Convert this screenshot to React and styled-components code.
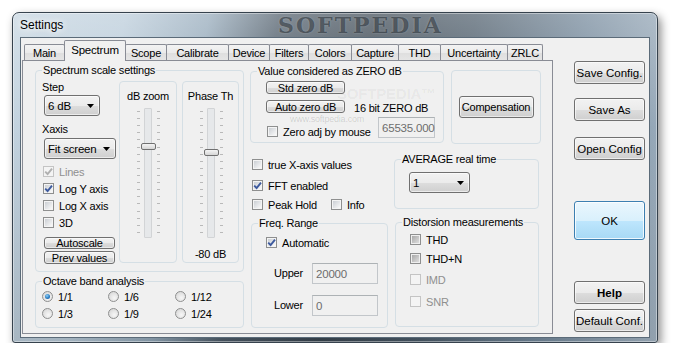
import React from 'react'
import styled, { createGlobalStyle } from 'styled-components'

const GlobalStyle = createGlobalStyle`
	html, body {
		margin: 0;
		background: #fff;
	}
	body {
		font-family: "Liberation Sans", Arial, sans-serif;
		font-size: 11px;
		color: #000;
	}
	* {
		box-sizing: border-box;
	}
`

const Stage = styled.div`
	padding: 12px 0 0 12px;
`

const Window = styled.div`
	position: relative;
	width: 646px;
	height: 331px;
	border: 1px solid #36424d;
	border-radius: 7px 7px 3px 3px;
	background:
		linear-gradient(180deg, rgba(255,255,255,0.3) 0%, rgba(255,255,255,0) 35%, rgba(0,0,0,0.12) 100%),
		linear-gradient(100deg, #c4d4e0 0%, #b9cbd9 16%, #93a8b9 28%, #4e5c69 38%, #3a4651 52%, #4b5b69 66%, #72879a 82%, #a6b7c6 100%);
	box-shadow: 3px 4px 10px rgba(0,0,0,0.45), inset 0 0 0 1px rgba(255,255,255,0.4);
	padding: 0 7px 4px 7px;
	display: flex;
	flex-direction: column;
`

const TitleBar = styled.div`
	position: relative;
	height: 24px;
	display: flex;
	align-items: center;
`

const TitleText = styled.span`
	position: relative;
	z-index: 1;
	font-size: 12px;
	color: #000;
	text-shadow: 0 0 6px #fff, 0 0 10px #fff;
`

const TitleMark = styled.span`
	position: absolute;
	left: 258px;
	top: 0;
	font-family: "DejaVu Serif", serif;
	font-weight: bold;
	font-size: 22px;
	line-height: 24px;
	letter-spacing: 2px;
	color: rgba(22, 30, 38, 0.55);
	text-shadow: 0 0 2px rgba(255,255,255,0.25);
`

const Client = styled.div`
	flex: 1;
	display: flex;
	background: #f0f0f0;
	border: 1px solid #5b6b79;
	padding: 2px 0 0 1px;
`

const TabArea = styled.div`
	display: flex;
	flex-direction: column;
	width: 531px;
`

const TabRow = styled.div`
	display: flex;
	align-items: flex-end;
	height: 21px;
	padding-left: 2px;
	margin-bottom: -1px;
	position: relative;
	z-index: 2;
`

const Tab = styled.div`
	position: relative;
	width: ${p => p.$w}px;
	height: ${p => (p.$active ? 21 : 16)}px;
	margin-left: ${p => (p.$first ? 0 : -1)}px;
	margin-bottom: ${p => (p.$active ? 0 : 1)}px;
	z-index: ${p => (p.$active ? 2 : 1)};
	border: 1px solid #898c95;
	border-bottom: none;
	border-radius: 2px 2px 0 0;
	background: ${p => (p.$active ? '#f0f0f0' : 'linear-gradient(#f3f3f3 0%, #ebebeb 50%, #dedede 51%, #e5e5e5 100%)')};
	display: flex;
	align-items: center;
	justify-content: center;
	padding-bottom: ${p => (p.$active ? 3 : 0)}px;
	font-size: ${p => (p.$active ? 11.5 : 11)}px;
	letter-spacing: -0.2px;
	white-space: nowrap;
`

const Panel = styled.div`
	position: relative;
	height: 274px;
	border: 1px solid #898c95;
	background: #f0f0f0;
	display: flex;
	align-items: flex-start;
	padding: 9px 0 0 12px;
	letter-spacing: -0.2px;
`

const Mark = styled.span`
	position: absolute;
	left: ${p => p.$x}px;
	top: ${p => p.$y}px;
	font-size: ${p => p.$size}px;
	font-weight: ${p => (p.$bold ? 'bold' : 'normal')};
	color: ${p => p.$color};
	white-space: nowrap;
	pointer-events: none;
`

const LeftCol = styled.div`
	display: flex;
	flex-direction: column;
	width: 209px;
	flex: none;
`

const MidCol = styled.div`
	display: flex;
	flex-direction: column;
	width: 290px;
	margin-left: 6px;
	flex: none;
`

const Row = styled.div`
	display: flex;
	align-items: ${p => p.$align || 'flex-start'};
	justify-content: ${p => p.$justify || 'flex-start'};
	height: ${p => p.$fill ? '100%' : 'auto'};
	margin-top: ${p => p.$mt || 0}px;
`

const Group = styled.div`
	position: relative;
	flex: none;
	width: ${p => p.$w}px;
	height: ${p => p.$h}px;
	margin-top: ${p => p.$mt || 0}px;
	margin-left: ${p => p.$ml || 0}px;
	border: 1px solid #d5dfe5;
	border-radius: 4px;
	padding: ${p => p.$pad || '0'};
`

const Legend = styled.span`
	position: absolute;
	top: -7px;
	left: 6px;
	padding: 0 1px;
	line-height: 13px;
	background: #f0f0f0;
	white-space: nowrap;
`

const Stack = styled.div`
	display: flex;
	flex-direction: column;
	align-items: flex-start;
	width: ${p => (p.$w ? `${p.$w}px` : 'auto')};
	padding-top: ${p => p.$pt || 0}px;
	flex: none;
`

const Label = styled.div`
	line-height: 13px;
	height: 13px;
	margin-top: ${p => p.$mt || 0}px;
	margin-left: ${p => p.$ml || 0}px;
	width: ${p => (p.$w ? `${p.$w}px` : 'auto')};
	white-space: nowrap;
	color: ${p => p.$color || '#000'};
`

const Drop = styled.div`
	width: ${p => p.$w}px;
	height: 21px;
	margin-top: ${p => p.$mt || 0}px;
	margin-left: ${p => p.$ml || 0}px;
	border: 1px solid #707070;
	border-radius: 3px;
	background: linear-gradient(#f2f2f2 0%, #ebebeb 50%, #dddddd 51%, #cfcfcf 100%);
	box-shadow: inset 0 0 0 1px rgba(255,255,255,0.6);
	display: flex;
	align-items: center;
	justify-content: space-between;
	padding: 0 5px 0 3px;
	font-size: 11.5px;
`

const Btn = styled.div`
	width: ${p => p.$w}px;
	height: ${p => p.$h}px;
	margin-top: ${p => p.$mt || 0}px;
	margin-left: ${p => p.$ml || 0}px;
	border: 1px solid #707070;
	border-radius: 3px;
	background: linear-gradient(#f2f2f2 0%, #ebebeb 50%, #dddddd 51%, #cfcfcf 100%);
	box-shadow: inset 0 0 0 1px rgba(255,255,255,0.55);
	display: flex;
	align-items: center;
	justify-content: center;
	line-height: 10px;
	white-space: nowrap;
	flex: none;
`

const Field = styled.div`
	width: ${p => p.$w}px;
	height: 21px;
	margin-left: ${p => p.$ml || 0};
	border: 1px solid #c2c6ca;
	border-top-color: #adb2b5;
	background: #f0f0f0;
	color: #6d6d6d;
	display: flex;
	align-items: center;
	padding-left: 3px;
	font-size: 11.5px;
	flex: none;
`

const CheckRow = styled.div`
	display: flex;
	align-items: center;
	height: 13px;
	margin-top: ${p => p.$mt || 0}px;
	margin-left: ${p => p.$ml || 0}px;
	color: ${p => (p.$disabled ? '#8f8f8f' : '#000')};
	white-space: nowrap;
	flex: none;
`

const CheckBox = styled.span`
	width: 11px;
	height: 11px;
	flex: none;
	margin-right: 5px;
	display: flex;
	align-items: center;
	justify-content: center;
	border: 1px solid ${p => (p.$disabled ? '#c4c4c4' : '#8e8f8f')};
	padding: 1px;
	background: ${p =>
		p.$disabled
			? '#f4f4f4'
			: p.$mixed
				? 'linear-gradient(135deg, #a8a8a8, #dedede) content-box, #efefef'
				: 'linear-gradient(135deg, #cbcfd4, #f9f9f9) content-box, #f4f4f4'};
	svg {
		margin: -2px;
	}
`

const RadioDot = styled.span`
	width: 11px;
	height: 11px;
	flex: none;
	margin-right: 5px;
	border-radius: 50%;
	border: 1px solid #8e8f8f;
	background: radial-gradient(circle at 60% 65%, #f7f7f7 0%, #d2d2d2 100%);
	display: flex;
	align-items: center;
	justify-content: center;
	&::after {
		content: '';
		display: ${p => (p.$on ? 'block' : 'none')};
		width: 5px;
		height: 5px;
		border-radius: 50%;
		background: radial-gradient(circle at 40% 35%, #8fd0f5 0%, #2b7dc4 55%, #17508d 100%);
	}
`

const RadioGrid = styled.div`
	display: grid;
	grid-template-columns: 66px 67px 66px;
	grid-auto-rows: 15px;
	row-gap: 2px;
`

const RadioCell = styled.div`
	display: flex;
	align-items: center;
`

const SubBox = styled.div`
	width: ${p => p.$w}px;
	height: 182px;
	margin-left: ${p => p.$ml || 0}px;
	border: 1px solid #d5dfe5;
	border-radius: 4px;
	display: flex;
	flex-direction: column;
	align-items: center;
	padding-top: 8px;
	flex: none;
`

const SliderBody = styled.div`
	display: flex;
	height: 130px;
	margin-top: 5px;
	margin-left: ${p => p.$ml || 0}px;
`

const TickCol = styled.div`
	display: flex;
	flex-direction: column;
	justify-content: space-between;
	padding: 3px 0 5px;
	width: 3px;
	margin: ${p => p.$m};
	span {
		display: block;
		height: 1px;
		background: #b9b9b9;
	}
`

const Track = styled.div`
	position: relative;
	width: 8px;
	height: 130px;
	border: 1px solid #d2d4d6;
	background: #e6e8ea;
	border-radius: 1px;
`

const Thumb = styled.div`
	position: absolute;
	left: -4px;
	width: 15px;
	height: 7px;
	border: 1px solid #707070;
	border-radius: 2px;
	background: linear-gradient(#f4f4f4, #d6d6d6);
`

const SideCol = styled.div`
	display: flex;
	flex-direction: column;
	margin-left: 21px;
	padding-top: 21px;
`

const SideBtn = styled.div`
	width: 71px;
	height: ${p => p.$h || 23}px;
	margin-top: ${p => p.$mt || 0}px;
	border: 1px solid ${p => (p.$primary ? '#3c7fb1' : '#707070')};
	border-radius: 3px;
	background: ${p =>
		p.$primary
			? 'linear-gradient(#eaf6fd 0%, #d9f0fc 50%, #bee6fd 51%, #a7d9f5 100%)'
			: 'linear-gradient(#f2f2f2 0%, #ebebeb 50%, #dddddd 51%, #cfcfcf 100%)'};
	box-shadow: inset 0 0 0 1px ${p => (p.$primary ? 'rgba(255,255,255,0.8)' : 'rgba(255,255,255,0.6)')};
	display: flex;
	align-items: center;
	justify-content: center;
	font-size: 11.5px;
	font-weight: ${p => (p.$bold ? 'bold' : 'normal')};
	white-space: nowrap;
`

const Arrow = () => (
	<svg width="7" height="4" viewBox="0 0 7 4">
		<path d="M0 0 H7 L3.5 4 Z" fill="#000" />
	</svg>
)

const Tick = ({ color }) => (
	<svg width="11" height="11" viewBox="0 0 11 11">
		<path d="M2.2 5.6 L4.6 8 L9 2.6" fill="none" stroke={color} strokeWidth="1.9" />
	</svg>
)

const Check = ({ label, checked, disabled, mixed, mt, ml }) => (
	<CheckRow $mt={mt} $ml={ml} $disabled={disabled}>
		<CheckBox $disabled={disabled} $mixed={mixed}>
			{checked && <Tick color={disabled ? '#b0b0b0' : '#3d5a9e'} />}
		</CheckBox>
		<span>{label}</span>
	</CheckRow>
)

const Slider = ({ pos, ml }) => (
	<SliderBody $ml={ml}>
		<TickCol $m="0 4px 0 0">
			{Array.from({ length: 18 }, (_, i) => <span key={i} />)}
		</TickCol>
		<Track>
			<Thumb style={{ top: pos }} />
		</Track>
		<TickCol $m="0 0 0 5px">
			{Array.from({ length: 18 }, (_, i) => <span key={i} />)}
		</TickCol>
	</SliderBody>
)

const tabs = [
	['Main', 41],
	['Spectrum', 62],
	['Scope', 42],
	['Calibrate', 63],
	['Device', 42],
	['Filters', 40],
	['Colors', 44],
	['Capture', 48],
	['THD', 43],
	['Uncertainty', 68],
	['ZRLC', 36],
]

const octaves = [
	['1/1', true],
	['1/6'],
	['1/12'],
	['1/3'],
	['1/9'],
	['1/24'],
]

export default function App() {
	return (
		<Stage>
			<GlobalStyle />
			<Window>
				<TitleBar>
					<TitleMark>SOFTPEDIA</TitleMark>
					<TitleText>Settings</TitleText>
				</TitleBar>
				<Client>
					<TabArea>
						<TabRow>
							{tabs.map(([name, w], i) => (
								<Tab key={name} $w={w} $first={i === 0} $active={name === 'Spectrum'}>
									{name}
								</Tab>
							))}
						</TabRow>
						<Panel>
							<Mark $x={314} $y={24} $size={15} $bold $color="rgba(0,0,0,0.05)">SOFTPEDIA™</Mark>
							<Mark $x={267} $y={53} $size={9} $color="rgba(0,0,0,0.15)">www.softpedia.com</Mark>

							<LeftCol>
								<Group $w={209} $h={202} $pad="10px 0 0 6px">
									<Legend>Spectrum scale settings</Legend>
									<Row>
										<Stack $w={77}>
											<Label>Step</Label>
											<Drop $w={56} $mt={1} $ml={2}>
												<span>6 dB</span>
												<Arrow />
											</Drop>
											<Label $mt={7}>Xaxis</Label>
											<Drop $w={72} $mt={2} $ml={2}>
												<span>Fit screen</span>
												<Arrow />
											</Drop>
											<Check label="Lines" checked disabled mt={6} ml={1} />
											<Check label="Log Y axis" checked mt={4} ml={1} />
											<Check label="Log X axis" mt={4} ml={1} />
											<Check label="3D" mt={4} ml={1} />
											<Btn $w={71} $h={12} $mt={8} $ml={2}>Autoscale</Btn>
											<Btn $w={71} $h={13} $mt={2} $ml={2}>Prev values</Btn>
										</Stack>
										<SubBox $w={58}>
											<Label>dB zoom</Label>
											<Slider pos={34} ml={1} />
										</SubBox>
										<SubBox $w={57} $ml={5}>
											<Label>Phase Th</Label>
											<Slider pos={40} ml={1} />
											<Label $mt={10}>-80 dB</Label>
										</SubBox>
									</Row>
								</Group>
								<Group $w={209} $h={47} $mt={9} $pad="7px 0 0 6px">
									<Legend>Octave band analysis</Legend>
									<RadioGrid>
										{octaves.map(([t, on]) => (
											<RadioCell key={t}>
												<RadioDot $on={on} />
												<span>{t}</span>
											</RadioCell>
										))}
									</RadioGrid>
								</Group>
							</LeftCol>

							<MidCol>
								<Row>
									<Group $w={194} $h={72} $mt={1} $pad="9px 8px 0 15px">
										<Legend>Value considered as ZERO dB</Legend>
										<Btn $w={79} $h={13}>Std zero dB</Btn>
										<Row $mt={6}>
											<Btn $w={79} $h={13}>Auto zero dB</Btn>
											<Label $ml={9} $mt={2}>16 bit ZERO dB</Label>
										</Row>
										<Row $mt={2}>
											<Check label="Zero adj by mouse" mt={8} ml={1} />
											<Field $w={57} $ml="auto">65535.000</Field>
										</Row>
									</Group>
									<Group $w={90} $h={74} $ml={7}>
										<Row $fill $align="center" $justify="center">
											<Btn $w={75} $h={22}>Compensation</Btn>
										</Row>
									</Group>
								</Row>

								<Row>
									<Stack $w={144} $pt={14}>
										<Check label="true X-axis values" ml={2} />
										<Check label="FFT enabled" checked mt={8} ml={2} />
										<Row $mt={6}>
											<Check label="Peak Hold" ml={2} />
											<Check label="Info" ml={14} />
										</Row>
									</Stack>
									<Group $w={145} $h={50} $mt={15} $pad="12px 0 0 14px">
										<Legend>AVERAGE real time</Legend>
										<Drop $w={61}>
											<span>1</span>
											<Arrow />
										</Drop>
									</Group>
								</Row>

								<Row $mt={11}>
									<Group $w={137} $h={105} $mt={1} $ml={1} $pad="12px 0 0 14px">
										<Legend>Freq. Range</Legend>
										<Check label="Automatic" checked />
										<Row $mt={14} $align="center">
											<Label $ml={8} $w={38}>Upper</Label>
											<Field $w={66}>20000</Field>
										</Row>
										<Row $mt={11} $align="center">
											<Label $ml={8} $w={38}>Lower</Label>
											<Field $w={66}>0</Field>
										</Row>
									</Group>
									<Group $w={144} $h={105} $ml={7} $pad="10px 0 0 14px">
										<Legend>Distorsion measurements</Legend>
										<Check label="THD" mixed />
										<Check label="THD+N" mixed mt={6} />
										<Check label="IMD" disabled mt={8} />
										<Check label="SNR" disabled mt={9} />
									</Group>
								</Row>
							</MidCol>
						</Panel>
					</TabArea>

					<SideCol>
						<SideBtn>Save Config.</SideBtn>
						<SideBtn $mt={14}>Save As</SideBtn>
						<SideBtn $mt={16}>Open Config</SideBtn>
						<SideBtn $mt={41} $h={39} $primary>OK</SideBtn>
						<SideBtn $mt={41} $bold>Help</SideBtn>
						<SideBtn $mt={5}>Default Conf.</SideBtn>
					</SideCol>
				</Client>
			</Window>
		</Stage>
	)
}
